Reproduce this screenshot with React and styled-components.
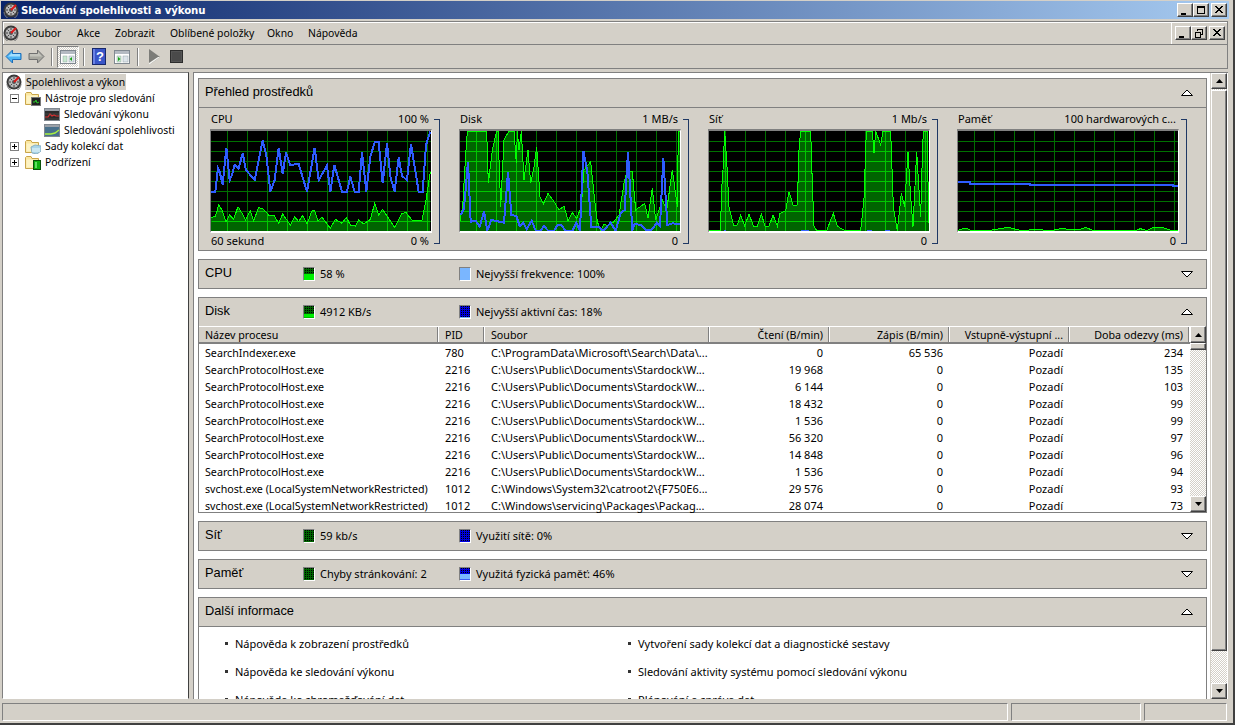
import React from 'react'
import styled, { createGlobalStyle } from 'styled-components'

const FACE = '#d4d0c8'
const SHADOW = '#808080'

const GlobalStyle = createGlobalStyle`
  html, body { margin: 0; padding: 0; width: 1235px; height: 725px; overflow: hidden; background: ${FACE}; }
  * { box-sizing: border-box; }
  body { font-family: "Noto Sans", "Liberation Sans", sans-serif; font-size: 11px; color: #000; }
`

const Window = styled.div`
  width: 1235px;
  height: 725px;
  display: flex;
  flex-direction: column;
  padding: 1px 3px 1px 1px;
  background: ${FACE};
  border-right: 2px solid #404040;
  border-bottom: 2px solid #404040;
  overflow: hidden;
`
const TitleBar = styled.div`
  height: 18px;
  width: 1228px;
  flex: none;
  display: flex;
  align-items: center;
  padding: 0 2px 0 2px;
  background: linear-gradient(90deg, #0a246a, #a6caf0);
  color: #fff;
  font-weight: 700;
  font-family: "DejaVu Sans", sans-serif;
`
const TitleText = styled.span`
  margin-left: 2px;
  flex: 1;
  font-size: 10.2px;
  letter-spacing: -0.12px;
`
const CaptionButtons = styled.div`
  display: flex;
  align-items: center;
`
const CapBtn = styled.div`
  width: ${p => p.$w || 16}px;
  height: 14px;
  margin-left: ${p => p.$ml || 0}px;
  background: ${FACE};
  border: 1px solid;
  border-color: #fff #404040 #404040 #fff;
  box-shadow: inset -1px -1px 0 ${SHADOW};
  display: flex;
  align-items: center;
  justify-content: center;
`
const MenuFrame = styled.div`
  height: 24px;
  width: 1226px;
  flex: none;
  margin: 2px 0 0 1px;
  display: flex;
  align-items: center;
  border: 1px solid ${SHADOW};
  box-shadow: inset 1px 1px 0 #fff;
`
const MenuItems = styled.div`
  display: flex;
  flex: 1;
  margin-left: 7px;
  font-size: 10.4px;
`
const MenuItem = styled.span`
  width: ${p => p.$w}px;
  line-height: 16px;
  white-space: nowrap;
`
const MdiButtons = styled.div`
  height: 22px;
  display: flex;
  align-items: center;
  border-left: 1px solid #fff;
  padding: 0 2px 0 3px;
`
const Toolbar = styled.div`
  height: 24px;
  width: 1226px;
  flex: none;
  margin: 0 0 0 1px;
  display: flex;
  align-items: center;
  padding-left: 2px;
  border-bottom: 1px solid ${SHADOW};
  border-right: 1px solid ${SHADOW};
  border-left: 1px solid ${SHADOW};
`
const ToolIcon = styled.div`
  width: ${p => p.$w}px;
  height: 22px;
  margin-right: ${p => p.$mr || 0}px;
  display: flex;
  align-items: center;
  justify-content: center;
  flex: none;
`
const ToolActive = styled(ToolIcon)`
  border: 1px solid;
  border-color: ${SHADOW} #fff #fff ${SHADOW};
  background: repeating-conic-gradient(${FACE} 0 25%, #fff 0 50%) 0 0 / 2px 2px;
`
const ToolSep = styled.div`
  width: 2px;
  height: 18px;
  margin-right: ${p => p.$mr}px;
  border-left: 1px solid ${SHADOW};
  border-right: 1px solid #fff;
  flex: none;
`
const Main = styled.div`
  height: 627px;
  flex: none;
  display: flex;
  margin: 3px 0 0 1px;
  width: 1226px;
`
const TreePane = styled.div`
  width: 187px;
  flex: none;
  background: #fff;
  border: 1px solid;
  border-color: ${SHADOW} #404040 #fff ${SHADOW};
  padding-top: 1px;
  overflow: hidden;
  font-size: 10.4px;
`
const TreeRow = styled.div`
  height: 16px;
  display: flex;
  align-items: center;
  white-space: nowrap;
  padding-left: ${p => p.$indent}px;
`
const Expander = styled.div`
  width: 9px;
  height: 9px;
  margin-right: 6px;
  flex: none;
  border: 1px solid #808080;
  position: relative;
  &::before {
    content: '';
    position: absolute;
    left: 1px;
    right: 1px;
    top: 3px;
    height: 1px;
    background: #000;
  }
  &::after {
    content: '';
    display: ${p => (p.$open ? 'none' : 'block')};
    position: absolute;
    top: 1px;
    bottom: 1px;
    left: 3px;
    width: 1px;
    background: #000;
  }
`
const TreeLabel = styled.span`
  margin-left: 3px;
  padding: 0 1px;
  line-height: 16px;
  background: ${p => (p.$selected ? FACE : 'transparent')};
`
const ContentPane = styled.div`
  margin-left: 4px;
  width: 1035px;
  flex: none;
  display: flex;
  background: #fff;
  border-top: 1px solid ${SHADOW};
  border-left: 1px solid ${SHADOW};
  overflow: hidden;
`
const Scroller = styled.div`
  width: 1016px;
  flex: none;
  height: 100%;
  padding: 5px 3px 0 4px;
  display: flex;
  flex-direction: column;
  gap: 8px;
  overflow: hidden;
`
const ScrollBar = styled.div`
  width: ${p => p.$w}px;
  flex: none;
  display: flex;
  flex-direction: column;
  background: repeating-conic-gradient(${FACE} 0 25%, #fff 0 50%) 0 0 / 2px 2px;
  border-left: ${p => (p.$line ? `1px solid ${FACE}` : 'none')};
`
const ScrollBtn = styled.div`
  height: ${p => p.$h || 16}px;
  flex: none;
  background: ${FACE};
  border: 1px solid;
  border-color: #fff #404040 #404040 #fff;
  box-shadow: inset -1px -1px 0 ${SHADOW};
  display: flex;
  align-items: center;
  justify-content: center;
`
const ScrollThumb = styled.div`
  height: ${p => p.$h}px;
  flex: none;
  margin-top: ${p => p.$mt || 0}px;
  background: ${FACE};
  border: 1px solid;
  border-color: #fff #404040 #404040 #fff;
  box-shadow: inset -1px -1px 0 ${SHADOW};
`
const ScrollRest = styled.div`
  flex: 1;
`
const Panel = styled.section`
  height: ${p => p.$h}px;
  flex: none;
  border: 1px solid ${SHADOW};
  background: ${p => p.$bg || FACE};
  display: flex;
  flex-direction: column;
`
const PanelHead = styled.header`
  height: ${p => p.$h || 28}px;
  flex: none;
  display: flex;
  align-items: center;
  background: ${FACE};
  padding: 0 13px 0 6px;
  border-bottom: ${p => (p.$line ? `1px solid ${SHADOW}` : 'none')};
`
const PanelTitle = styled.h2`
  margin: 0 0 ${p => p.$up || 0}px;
  width: ${p => p.$w || 'auto'};
  flex: ${p => (p.$w ? 'none' : '1')};
  font: 400 12.8px "Liberation Sans", sans-serif;
`
const Legend = styled.div`
  width: 156px;
  flex: none;
  display: flex;
  align-items: center;
  white-space: nowrap;
`
const LegendText = styled.span`
  margin-bottom: 2px;
`
const Legends = styled.div`
  flex: 1;
  display: flex;
`
const Swatch = styled.i`
  width: 12px;
  height: 14px;
  flex: none;
  margin-right: 5px;
  border: 1px solid;
  border-color: ${SHADOW} #fff #fff ${SHADOW};
  background-color: ${p => p.$dot};
  background-image:
    linear-gradient(${p => p.$fill}, ${p => p.$fill}),
    conic-gradient(#000 0 25%, transparent 0);
  background-size: 100% ${p => p.$level}%, 2px 2px;
  background-position: bottom, 0 0;
  background-repeat: no-repeat, repeat;
`
const ChartRow = styled.div`
  display: flex;
  gap: 19px;
  padding: 4px 0 0 11px;
`
const ChartCard = styled.div`
  display: flex;
  width: 230px;
`
const ChartColumn = styled.div`
  width: 222px;
  flex: none;
`
const ChartLabels = styled.div`
  height: ${p => p.$h}px;
  display: flex;
  justify-content: space-between;
  padding: ${p => p.$top || 0}px 3px 0 1px;
  line-height: 14px;
  white-space: nowrap;
`
const ChartBox = styled.div`
  width: 222px;
  height: 104px;
  background: #000;
  border: 1px solid;
  border-width: 2px 1px 2px 1px;
  border-color: ${SHADOW} #fff #fff ${SHADOW};
  svg { display: block; }
`
const Bracket = styled.div`
  width: 6px;
  height: 125px;
  flex: none;
  margin: 7px 0 0 2px;
  border: 1px solid #1f3864;
  border-left: 0;
`
const TableWrap = styled.div`
  flex: 1;
  display: flex;
  min-height: 0;
  background: #fff;
`
const TableBody = styled.div`
  width: 991px;
  flex: none;
`
const HeadRow = styled.div`
  display: grid;
  grid-template-columns: 240px 46px 225px repeat(4, 120px);
  height: 18px;
  background: ${FACE};
  border-top: 1px solid #fff;
  border-bottom: 2px solid ${SHADOW};
  font-size: 10.7px;
`
const HeadCell = styled.div`
  padding: 0 7px 0 6px;
  line-height: 17px;
  text-align: ${p => (p.$right ? 'right' : 'left')};
  box-shadow: inset -1px 0 0 #fff, inset -2px 0 0 ${SHADOW};
  white-space: nowrap;
  overflow: hidden;
`
const Row = styled.div`
  display: grid;
  grid-template-columns: 240px 46px 225px repeat(4, 120px);
  height: 17px;
  line-height: 17px;
  & > div:first-child { font-size: 10.7px; padding-top: 1px; }
`
const Cell = styled.div`
  padding: 0 7px 0 6px;
  text-align: ${p => (p.$right ? 'right' : 'left')};
  white-space: nowrap;
`
const InfoBody = styled.div`
  flex: 1;
  background: #fff;
  display: grid;
  grid-template-columns: 403px 1fr;
  grid-auto-rows: 28px;
  padding: 8px 0 0 26px;
`
const InfoItem = styled.div`
  display: flex;
  align-items: center;
  height: 16px;
  &::before {
    content: '';
    width: 3px;
    height: 3px;
    margin-right: 7px;
    background: #333;
    flex: none;
  }
`
const StatusBar = styled.div`
  height: 18px;
  flex: none;
  margin: 4px 0 0 1px;
  width: 1225px;
  display: flex;
  gap: 3px;
`
const StatusCell = styled.div`
  width: ${p => p.$w}px;
  flex: none;
  border: 1px solid;
  border-color: ${SHADOW} #fff #fff ${SHADOW};
`

/* icons */
const Gauge = () => (
  <svg width="16" height="16" viewBox="0 0 16 16">
    <circle cx="8" cy="8" r="7.5" fill="#3a3a3a" />
    <circle cx="8" cy="8" r="5.5" fill="#b8b8b8" />
    <path d="M8 3v2M3 8h2M11 8h2M4.5 4.5l1.5 1.5M4.5 11.5L6 10M11.5 11.5L10 10M8 11v2" stroke="#444" strokeWidth="1" />
    <circle cx="8" cy="8" r="2" fill="#555" />
    <path d="M8 8l5-5" stroke="#e01818" strokeWidth="2" />
    <path d="M1 10a7 7 0 0 0 14 0" fill="none" stroke="#777" strokeWidth="1" />
  </svg>
)
const Folder = ({ children }) => (
  <svg width="16" height="16" viewBox="0 0 16 16">
    <path d="M.5 3.5V14.5H13.5V4.5H7L6 2.5H1.5Z" fill="#fbe7a0" stroke="#c9a54a" />
    <path d="M1.5 5.5H12.5V13.5H1.5Z" fill="#fdf3c4" />
    {children}
  </svg>
)
const MonitorFolder = () => (
  <Folder>
    <rect x="6.5" y="7.5" width="9" height="8" fill="#222" stroke="#777" />
    <path d="M8 12h2l1-2 1 3 2-1" fill="none" stroke="#28c828" strokeWidth="1" />
  </Folder>
)
const DataFolder = () => (
  <Folder>
    <path d="M6 9l4-2 6 1v5l-4 3-5-1Z" fill="#a8d4e8" stroke="#8ab0c4" />
    <path d="M7 10h8v4H7Z" fill="#c9e6f2" />
  </Folder>
)
const ReportFolder = () => (
  <Folder>
    <rect x="8.5" y="6.5" width="7" height="9" fill="#10b010" stroke="#0a500a" />
    <rect x="10" y="8" width="2" height="6" fill="#60e060" />
  </Folder>
)
const PerfIcon = () => (
  <svg width="16" height="13" viewBox="0 0 16 13">
    <rect x=".5" y=".5" width="15" height="12" fill="#2c2c2c" stroke="#808890" />
    <rect x="1" y="1" width="14" height="2" fill="#9aa0a8" />
    <path d="M1 9h3l2-3 2 2 2-1 2 1h3" fill="none" stroke="#d83030" strokeWidth="1.2" />
    <path d="M1 6h14M1 11h14" stroke="#555" strokeWidth=".6" />
  </svg>
)
const RelIcon = () => (
  <svg width="16" height="13" viewBox="0 0 16 13">
    <rect x=".5" y=".5" width="15" height="12" fill="#48708c" stroke="#808890" />
    <rect x="1" y="1" width="14" height="2" fill="#9aa0a8" />
    <path d="M1 10h6l4-1 4-3" fill="none" stroke="#a8f040" strokeWidth="1.4" />
  </svg>
)
const Back = () => (
  <svg width="17" height="15" viewBox="0 0 17 15">
    <path d="M7.5 1L1 7.5 7.5 14V10.5H16V4.5H7.5Z" fill="#4cb4f4" stroke="#1c6cb8" />
    <path d="M7 4L3 7.5H15V5H7Z" fill="#a4e0ff" />
  </svg>
)
const Forward = () => (
  <svg width="17" height="15" viewBox="0 0 17 15">
    <path d="M9.5 1L16 7.5 9.5 14V10.5H1V4.5H9.5Z" fill="#a8a8a0" stroke="#707070" />
    <path d="M2 5H10V3L14 7.5H2Z" fill="#c4c4bc" />
  </svg>
)
const PaneIcon = ({ right }) => (
  <svg width="16" height="14" viewBox="0 0 16 14">
    <rect x=".5" y=".5" width="15" height="13" fill="#fff" stroke="#808890" />
    <rect x="1" y="1" width="14" height="3" fill="#b4bac2" />
    <rect x="3" y="6" width="4" height="6" fill="#c8e8d0" stroke="#90a8a0" strokeWidth=".5" />
    <rect x="9" y="6" width="5" height="6" fill="#dde4ea" stroke="#90a0a8" strokeWidth=".5" />
    <path d={right ? 'M4 7l2.5 2L4 11Z' : 'M12 7L9.5 9 12 11Z'} fill="#18a018" />
  </svg>
)
const HelpBook = () => (
  <svg width="14" height="17" viewBox="0 0 14 17">
    <rect x=".5" y=".5" width="13" height="16" fill="#3a56c8" stroke="#18286c" />
    <rect x="1" y="1" width="2" height="15" fill="#6a82e4" />
    <text x="8" y="13" textAnchor="middle" fontFamily="Liberation Sans" fontWeight="700" fontSize="13" fill="#fff">?</text>
  </svg>
)
const Play = () => (
  <svg width="12" height="16" viewBox="0 0 12 16">
    <path d="M0 0L11 8 0 16Z" fill="#7c7c78" />
    <path d="M11 8L0 16V14L9 8Z" fill="#f4f4f0" />
  </svg>
)
const Stop = () => (
  <svg width="13" height="13" viewBox="0 0 13 13">
    <rect x=".5" y=".5" width="12" height="12" fill="#555" stroke="#2c2c2c" />
    <rect x="2" y="2" width="9" height="9" fill="#4a4a4a" />
  </svg>
)
const Arrow = ({ down }) => (
  <svg width="12" height="8" viewBox="0 0 12 8">
    <path d={down ? 'M.5 1.5H11.5L6 7Z' : 'M.5 6.5H11.5L6 1Z'} fill="#fff" stroke="#000" />
  </svg>
)
const Tri = ({ down }) => (
  <svg width="7" height="4" viewBox="0 0 7 4">
    <path d={down ? 'M0 0H7L3.5 4Z' : 'M0 4H7L3.5 0Z'} fill="#000" />
  </svg>
)
const Glyph = ({ d }) => (
  <svg width="10" height="9" viewBox="0 0 10 9">
    <path d={d} fill="none" stroke="#000" strokeWidth="1" shapeRendering="crispEdges" />
  </svg>
)
const GLYPH = {
  min: 'M1 7.5H6M1 8.5H6',
  max: 'M1.5 .5H8.5V7.5H1.5ZM1.5 1.5H8.5',
  close: 'M1.5 .5L8.5 7.5M8.5 .5L1.5 7.5M2.5 .5L9.5 7.5M7.5 .5L.5 7.5',
  restore: 'M3.5 2V.5H8.5V5.5H7M1.5 3.5H6.5V8.5H1.5Z',
}

/* chart traces, in 3x px of the graph area */
const CHARTS = [
  {
    id: 'cpu', ox: 44, left: 'CPU', right: '100 %', foot: '60 sekund', footR: '0 %',
    blue: [[48,277],[60,275],[68,205],[73,215],[82,255],[93,143],[103,240],[110,225],[118,195],[130,205],[142,160],[152,210],[178,240],[202,122],[213,165],[225,275],[238,240],[250,143],[262,222],[272,158],[285,195],[310,192],[335,275],[358,143],[370,240],[395,197],[405,275],[417,195],[440,275],[455,275],[465,230],[478,275],[490,275],[500,157],[513,275],[525,170],[538,127],[550,127],[562,250],[575,130],[585,230],[598,275],[610,172],[620,228],[635,240],[647,132],[670,275],[682,275],[692,135],[705,95]],
    green: [[48,352],[60,350],[70,315],[80,330],[92,365],[102,345],[115,358],[128,320],[140,340],[150,360],[165,332],[175,362],[190,323],[205,328],[220,345],[235,345],[250,370],[262,342],[285,375],[298,350],[310,365],[322,347],[335,372],[350,332],[358,332],[368,362],[380,352],[405,385],[420,358],[440,370],[453,352],[465,375],[480,378],[490,360],[505,372],[525,358],[538,310],[550,345],[562,328],[580,355],[598,382],[620,340],[632,338],[650,360],[680,360],[692,300],[705,215]],
  },
  {
    id: 'disk', ox: 25, left: 'Disk', right: '1 MB/s', foot: '', footR: '0',
    blue: [[30,345],[40,325],[52,185],[60,365],[75,362],[87,380],[100,335],[110,392],[122,360],[160,368],[172,215],[182,345],[197,348],[207,378],[218,368],[228,388],[243,362],[255,392],[270,392],[280,378],[292,392],[310,392],[320,376],[332,376],[345,392],[365,392],[377,368],[388,392],[398,152],[410,215],[422,382],[445,382],[458,392],[480,368],[495,392],[510,340],[522,330],[532,155],[545,392],[552,372],[570,375],[588,392],[605,388],[618,368],[628,378],[638,175],[650,375],[665,370],[688,372]],
    green: [[28,362],[36,320],[44,180],[50,93],[78,93],[108,93],[113,250],[125,150],[138,93],[142,93],[150,320],[160,120],[175,93],[190,93],[197,190],[200,93],[205,150],[212,93],[220,240],[232,150],[240,250],[250,200],[258,140],[268,290],[278,312],[292,280],[310,305],[325,330],[340,318],[352,362],[365,338],[378,355],[392,320],[400,210],[420,185],[432,300],[440,365],[450,392],[460,372],[470,378],[490,365],[505,345],[520,250],[530,210],[545,215],[555,330],[582,310],[592,355],[605,265],[615,360],[635,300],[648,330],[665,210],[680,320],[683,93],[688,93]],
  },
  {
    id: 'net', ox: 22, left: 'Síť', right: '1 Mb/s', foot: '', footR: '0',
    blue: [[70,392],[76,392],[300,392],[326,392],[498,392],[514,392],[552,392],[568,392]],
    blueSplit: true,
    green: [[22,392],[60,392],[62,280],[67,210],[72,93],[78,180],[85,320],[92,350],[100,378],[110,375],[120,345],[132,378],[145,342],[158,378],[170,378],[182,342],[193,378],[205,378],[217,345],[230,378],[238,340],[255,332],[265,275],[278,318],[290,315],[295,150],[300,93],[330,93],[335,250],[340,378],[348,392],[378,392],[398,340],[410,378],[425,388],[436,392],[480,392],[490,295],[497,93],[515,93],[520,160],[525,93],[540,135],[547,93],[570,93],[578,320],[590,392],[602,280],[612,320],[622,155],[630,290],[637,380],[648,155],[660,350],[665,170],[668,93],[680,93],[683,320],[686,392]],
  },
  {
    id: 'mem', ox: 20, left: 'Paměť', right: '100 hardwarových c...', foot: '', footR: '0',
    blue: [[20,247],[58,247],[58,252],[238,252],[238,256],[668,256],[668,258],[685,258]],
    green: [[20,392],[45,384],[65,392],[125,390],[175,382],[215,392],[255,388],[300,392],[332,386],[385,390],[405,382],[430,392],[555,392],[570,386],[590,392],[605,384],[635,382],[665,392],[685,392]],
  },
]

const toPoints = list => list.map(p => p.join(',')).join(' ')

const Graph = ({ chart }) => {
  const { id, ox, green, blue, blueSplit } = chart
  const xs = Array.from({ length: 11 }, (_, i) => ox + 53 + i * 60)
  const ys = Array.from({ length: 9 }, (_, i) => 125 + i * 30)
  const area = toPoints([[green[0][0], 396], ...green, [green[green.length - 1][0], 396]])
  const lines = color => (
    <g stroke={color} strokeWidth="1">
      {xs.map(x => <line key={x} x1={x} x2={x} y1="90" y2="396" vectorEffect="non-scaling-stroke" />)}
      {ys.map(y => <line key={y} y1={y} y2={y} x1={ox} x2={ox + 663} vectorEffect="non-scaling-stroke" />)}
    </g>
  )
  return (
    <svg width="220" height="100" viewBox={`${ox + 3} 93 660 300`} shapeRendering="crispEdges">
      <defs>
        <clipPath id={`${id}-area`}><polygon points={area} /></clipPath>
      </defs>
      {lines('#007000')}
      <polygon points={area} fill="#006400" />
      <g clipPath={`url(#${id}-area)`}>{lines('#00c800')}</g>
      <polyline points={toPoints(green)} fill="none" stroke="#00ff00" strokeWidth="1" vectorEffect="non-scaling-stroke" />
      {blueSplit
        ? [0, 2, 4, 6].map(i => (
            <polyline key={i} points={toPoints(blue.slice(i, i + 2))} fill="none" stroke="#3a66ff" strokeWidth="1.5" vectorEffect="non-scaling-stroke" />
          ))
        : <polyline points={toPoints(blue)} fill="none" stroke="#2e5cff" strokeWidth="2" vectorEffect="non-scaling-stroke" />}
    </svg>
  )
}

const COLUMNS = [
  ['Název procesu'], ['PID'], ['Soubor'], ['Čtení (B/min)', 1], ['Zápis (B/min)', 1], ['Vstupně-výstupní ...', 1], ['Doba odezvy (ms)', 1],
]
const SEARCH = 'SearchProtocolHost.exe'
const STARDOCK = 'C:\\Users\\Public\\Documents\\Stardock\\W...'
const SVC = 'svchost.exe (LocalSystemNetworkRestricted)'
const PROCESSES = [
  ['SearchIndexer.exe', '780', 'C:\\ProgramData\\Microsoft\\Search\\Data\\...', '0', '65 536', '234'],
  [SEARCH, '2216', STARDOCK, '19 968', '0', '135'],
  [SEARCH, '2216', STARDOCK, '6 144', '0', '103'],
  [SEARCH, '2216', STARDOCK, '18 432', '0', '99'],
  [SEARCH, '2216', STARDOCK, '1 536', '0', '99'],
  [SEARCH, '2216', STARDOCK, '56 320', '0', '97'],
  [SEARCH, '2216', STARDOCK, '14 848', '0', '96'],
  [SEARCH, '2216', STARDOCK, '1 536', '0', '94'],
  [SVC, '1012', 'C:\\Windows\\System32\\catroot2\\{F750E6...', '29 576', '0', '93'],
  [SVC, '1012', 'C:\\Windows\\servicing\\Packages\\Packag...', '28 074', '0', '73'],
]
const INFO = [
  'Nápověda k zobrazení prostředků', 'Vytvoření sady kolekcí dat a diagnostické sestavy',
  'Nápověda ke sledování výkonu', 'Sledování aktivity systému pomocí sledování výkonu',
  'Nápověda ke shromažďování dat', 'Plánování a správa dat',
]
const DARK = '#006400'
const BLUE = '#0000e0'

const SummaryHead = ({ title, first, second, open }) => (
  <PanelHead>
    <PanelTitle $w="98px" $up={4}>{title}</PanelTitle>
    <Legends>
      <Legend><Swatch $dot={first.dot} $fill={first.fill} $level={first.level} /><LegendText>{first.text}</LegendText></Legend>
      <Legend><Swatch $dot={second.dot} $fill={second.fill} $level={second.level} /><LegendText>{second.text}</LegendText></Legend>
    </Legends>
    <Arrow down={!open} />
  </PanelHead>
)

export default function App() {
  return (
    <Window>
      <GlobalStyle />
      <TitleBar>
        <Gauge />
        <TitleText>Sledování spolehlivosti a výkonu</TitleText>
        <CaptionButtons>
          <CapBtn><Glyph d={GLYPH.min} /></CapBtn>
          <CapBtn><Glyph d={GLYPH.max} /></CapBtn>
          <CapBtn $ml={2}><Glyph d={GLYPH.close} /></CapBtn>
        </CaptionButtons>
      </TitleBar>
      <MenuFrame>
        <Gauge />
        <MenuItems>
          <MenuItem $w={51}>Soubor</MenuItem>
          <MenuItem $w={38}>Akce</MenuItem>
          <MenuItem $w={55}>Zobrazit</MenuItem>
          <MenuItem $w={97}>Oblíbené položky</MenuItem>
          <MenuItem $w={41}>Okno</MenuItem>
          <MenuItem $w={60}>Nápověda</MenuItem>
        </MenuItems>
        <MdiButtons>
          <CapBtn><Glyph d={GLYPH.min} /></CapBtn>
          <CapBtn><Glyph d={GLYPH.restore} /></CapBtn>
          <CapBtn $ml={2}><Glyph d={GLYPH.close} /></CapBtn>
        </MdiButtons>
      </MenuFrame>
      <Toolbar>
        <ToolIcon $w={17} $mr={6}><Back /></ToolIcon>
        <ToolIcon $w={17} $mr={6}><Forward /></ToolIcon>
        <ToolSep $mr={4} />
        <ToolActive $w={22} $mr={4}><PaneIcon /></ToolActive>
        <ToolSep $mr={7} />
        <ToolIcon $w={14} $mr={8}><HelpBook /></ToolIcon>
        <ToolIcon $w={16} $mr={7}><PaneIcon right /></ToolIcon>
        <ToolSep $mr={10} />
        <ToolIcon $w={12} $mr={9}><Play /></ToolIcon>
        <ToolIcon $w={13}><Stop /></ToolIcon>
      </Toolbar>
      <Main>
        <TreePane>
          <TreeRow $indent={3}>
            <Gauge /><TreeLabel $selected>Spolehlivost a výkon</TreeLabel>
          </TreeRow>
          <TreeRow $indent={7}>
            <Expander $open /><MonitorFolder /><TreeLabel>Nástroje pro sledování</TreeLabel>
          </TreeRow>
          <TreeRow $indent={41}><PerfIcon /><TreeLabel>Sledování výkonu</TreeLabel></TreeRow>
          <TreeRow $indent={41}><RelIcon /><TreeLabel>Sledování spolehlivosti</TreeLabel></TreeRow>
          <TreeRow $indent={7}>
            <Expander /><DataFolder /><TreeLabel>Sady kolekcí dat</TreeLabel>
          </TreeRow>
          <TreeRow $indent={7}>
            <Expander /><ReportFolder /><TreeLabel>Podřízení</TreeLabel>
          </TreeRow>
        </TreePane>
        <ContentPane>
          <Scroller>
            <Panel $h={173}>
              <PanelHead $h={29} $line>
                <PanelTitle $up={4}>Přehled prostředků</PanelTitle>
                <Arrow />
              </PanelHead>
              <ChartRow>
                {CHARTS.map(chart => (
                  <ChartCard key={chart.id}>
                    <ChartColumn>
                      <ChartLabels $h={17}><span>{chart.left}</span><span>{chart.right}</span></ChartLabels>
                      <ChartBox><Graph chart={chart} /></ChartBox>
                      <ChartLabels $h={14} $top={1}><span>{chart.foot}</span><span>{chart.footR}</span></ChartLabels>
                    </ChartColumn>
                    <Bracket />
                  </ChartCard>
                ))}
              </ChartRow>
            </Panel>
            <Panel $h={30}>
              <SummaryHead
                title="CPU"
                first={{ dot: DARK, fill: '#00f000', level: 50, text: '58 %' }}
                second={{ dot: '#7ab6ff', fill: '#7ab6ff', level: 100, text: 'Nejvyšší frekvence: 100%' }}
              />
            </Panel>
            <Panel $h={216}>
              <SummaryHead
                open
                title="Disk"
                first={{ dot: DARK, fill: '#00f000', level: 30, text: '4912 KB/s' }}
                second={{ dot: BLUE, fill: '#7ab6ff', level: 8, text: 'Nejvyšší aktivní čas: 18%' }}
              />
              <TableWrap>
                <TableBody>
                  <HeadRow>
                    {COLUMNS.map(([label, right]) => <HeadCell key={label} $right={right}>{label}</HeadCell>)}
                  </HeadRow>
                  {PROCESSES.map((p, i) => (
                    <Row key={i}>
                      <Cell>{p[0]}</Cell>
                      <Cell>{p[1]}</Cell>
                      <Cell>{p[2]}</Cell>
                      <Cell $right>{p[3]}</Cell>
                      <Cell $right>{p[4]}</Cell>
                      <Cell $right>Pozadí</Cell>
                      <Cell $right>{p[5]}</Cell>
                    </Row>
                  ))}
                </TableBody>
                <ScrollBar $w={16}>
                  <ScrollBtn $h={17}><Tri /></ScrollBtn>
                  <ScrollThumb $h={7} />
                  <ScrollRest />
                  <ScrollBtn><Tri down /></ScrollBtn>
                </ScrollBar>
              </TableWrap>
            </Panel>
            <Panel $h={30}>
              <SummaryHead
                title="Síť"
                first={{ dot: DARK, fill: '#00f000', level: 0, text: '59 kb/s' }}
                second={{ dot: BLUE, fill: '#7ab6ff', level: 0, text: 'Využití sítě: 0%' }}
              />
            </Panel>
            <Panel $h={30}>
              <SummaryHead
                title="Paměť"
                first={{ dot: DARK, fill: '#00f000', level: 0, text: 'Chyby stránkování: 2' }}
                second={{ dot: BLUE, fill: '#7ab6ff', level: 46, text: 'Využitá fyzická paměť: 46%' }}
              />
            </Panel>
            <Panel $h={120} $bg="#fff">
              <PanelHead $h={29} $line>
                <PanelTitle $up={3}>Další informace</PanelTitle>
                <Arrow />
              </PanelHead>
              <InfoBody>
                {INFO.map(text => <InfoItem key={text}>{text}</InfoItem>)}
              </InfoBody>
            </Panel>
          </Scroller>
          <ScrollBar $w={17} $line>
            <ScrollBtn><Tri /></ScrollBtn>
            <ScrollThumb $h={561} $mt={1} />
            <ScrollRest />
            <ScrollBtn><Tri down /></ScrollBtn>
          </ScrollBar>
        </ContentPane>
      </Main>
      <StatusBar>
        <StatusCell $w={1006} />
        <StatusCell $w={130} />
        <StatusCell $w={83} />
      </StatusBar>
    </Window>
  )
}
